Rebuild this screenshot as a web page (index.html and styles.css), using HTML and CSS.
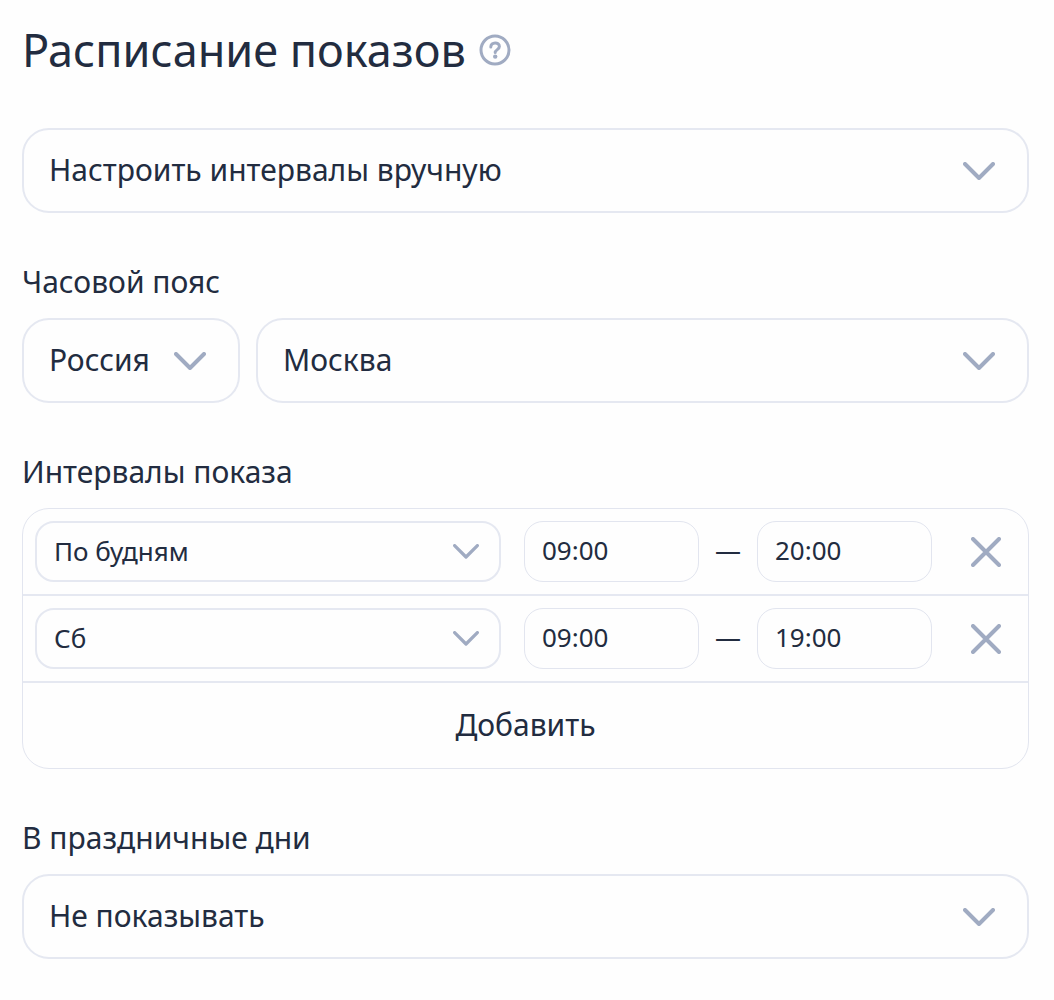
FILE: index.html
```html
<!DOCTYPE html>
<html lang="ru">
<head>
    <meta charset="UTF-8">
    <meta name="viewport" content="width=device-width, initial-scale=1.0">
    <title>Расписание показов</title>
    <link rel="stylesheet" href="styles.css">
</head>
<body>
    <form class="schedule">
        <div class="header">
            <h1 class="title">Расписание показов</h1>
            <button type="button" class="help" aria-label="Справка">
                <svg width="32" height="32" viewBox="0 0 32 32">
                    <circle cx="16" cy="16" r="14"></circle>
                    <path d="M11.8 13 C11.8 7.6 20.4 7.6 20.4 12.6 C20.4 15.6 16.2 15.6 16.2 18.6"></path>
                    <circle class="help-dot" cx="16.2" cy="22.6" r="2.2"></circle>
                </svg>
            </button>
        </div>

        <div class="select">
            <select id="mode" aria-label="Расписание показов">
                <option>Настроить интервалы вручную</option>
            </select>
            <svg class="chevron" viewBox="0 0 32 18"><path d="M2 2 L16 16 L30 2"></path></svg>
        </div>

        <label class="label" for="city">Часовой пояс</label>
        <div class="timezone">
            <div class="select select-country">
                <select id="country" aria-label="Страна">
                    <option>Россия</option>
                </select>
                <svg class="chevron" viewBox="0 0 32 18"><path d="M2 2 L16 16 L30 2"></path></svg>
            </div>
            <div class="select select-city">
                <select id="city">
                    <option>Москва</option>
                </select>
                <svg class="chevron" viewBox="0 0 32 18"><path d="M2 2 L16 16 L30 2"></path></svg>
            </div>
        </div>

        <label class="label" for="days1">Интервалы показа</label>
        <div class="intervals">
            <div class="row">
                <div class="select select-small">
                    <select id="days1">
                        <option>По будням</option>
                    </select>
                    <svg class="chevron" viewBox="0 0 32 18"><path d="M2 2 L16 16 L30 2"></path></svg>
                </div>
                <div class="range">
                    <input class="time" type="text" value="09:00" aria-label="Начало">
                    <span class="dash">—</span>
                    <input class="time" type="text" value="20:00" aria-label="Конец">
                </div>
                <button type="button" class="remove" aria-label="Удалить">
                    <svg width="30" height="30" viewBox="0 0 30 30"><path d="M2 2 L28 28 M28 2 L2 28"></path></svg>
                </button>
            </div>
            <div class="row">
                <div class="select select-small">
                    <select id="days2" aria-label="Дни">
                        <option>Сб</option>
                    </select>
                    <svg class="chevron" viewBox="0 0 32 18"><path d="M2 2 L16 16 L30 2"></path></svg>
                </div>
                <div class="range">
                    <input class="time" type="text" value="09:00" aria-label="Начало">
                    <span class="dash">—</span>
                    <input class="time" type="text" value="19:00" aria-label="Конец">
                </div>
                <button type="button" class="remove" aria-label="Удалить">
                    <svg width="30" height="30" viewBox="0 0 30 30"><path d="M2 2 L28 28 M28 2 L2 28"></path></svg>
                </button>
            </div>
            <button type="button" class="add">Добавить</button>
        </div>

        <label class="label" for="holidays">В праздничные дни</label>
        <div class="select">
            <select id="holidays">
                <option>Не показывать</option>
            </select>
            <svg class="chevron" viewBox="0 0 32 18"><path d="M2 2 L16 16 L30 2"></path></svg>
        </div>
    </form>
</body>
</html>
```

FILE: styles.css
```css
* {
    box-sizing: border-box;
}

body {
    margin: 0;
    background: #fefefe;
    color: #222c40;
    font-family: "Noto Sans", "Open Sans", sans-serif;
    font-size: 30px;
}

select,
input,
button {
    margin: 0;
    background: none;
    color: inherit;
    font-family: inherit;
    font-size: inherit;
}

button {
    padding: 0;
    border: none;
    cursor: pointer;
}

svg {
    display: block;
    fill: none;
    stroke: #a0abc2;
    stroke-width: 4;
    stroke-linecap: round;
    stroke-linejoin: round;
}

.schedule {
    padding: 20px 25px 40px 22px;
}

.header {
    display: flex;
    align-items: center;
    gap: 13px;
    margin-bottom: 48px;
}

.title {
    margin: 0;
    font-size: 45px;
    font-weight: 400;
    line-height: 60px;
}

.help svg {
    stroke-width: 3;
}

.help-dot {
    fill: #a0abc2;
    stroke: none;
}

.label {
    display: block;
    margin: 49px 0 16px;
    line-height: 40px;
}

/* Выпадающий список: стрелка лежит в той же ячейке */
.select {
    display: grid;
    align-items: center;
}

.select select,
.chevron {
    grid-area: 1 / 1;
}

.select select {
    width: 100%;
    height: 85px;
    padding: 0 80px 2px 25px;
    border: 2px solid #e5e8f1;
    border-radius: 27px;
    appearance: none;
}

.chevron {
    justify-self: end;
    width: 32px;
    margin-right: 34px;
    pointer-events: none;
}

.timezone {
    display: flex;
    gap: 16px;
}

.select-country {
    flex: 0 0 218px;
}

.select-city {
    flex: 1;
}

/* Таблица интервалов */
.intervals {
    border: 1px solid #e2e5ef;
    border-radius: 27px;
}

.row {
    display: flex;
    align-items: center;
    gap: 23px;
    padding: 12px;
    border-bottom: 2px solid #e5e8f1;
}

.select-small {
    flex: 1;
    font-size: 26px;
}

.select-small select {
    height: 61px;
    padding: 0 60px 2px 17px;
    border-radius: 19px;
}

.select-small .chevron {
    width: 26px;
    margin-right: 22px;
}

.range {
    display: flex;
    align-items: center;
    justify-content: space-between;
    width: 408px;
    font-size: 26px;
}

.time {
    width: 175px;
    height: 61px;
    padding: 0 17px 4px;
    border: 1px solid #e2e5ef;
    border-radius: 19px;
}

.dash {
    padding-bottom: 4px;
}

.remove {
    display: flex;
    align-items: center;
    justify-content: center;
    width: 61px;
    height: 61px;
}

.add {
    display: block;
    width: 100%;
    height: 85px;
    padding-bottom: 3px;
}
```
